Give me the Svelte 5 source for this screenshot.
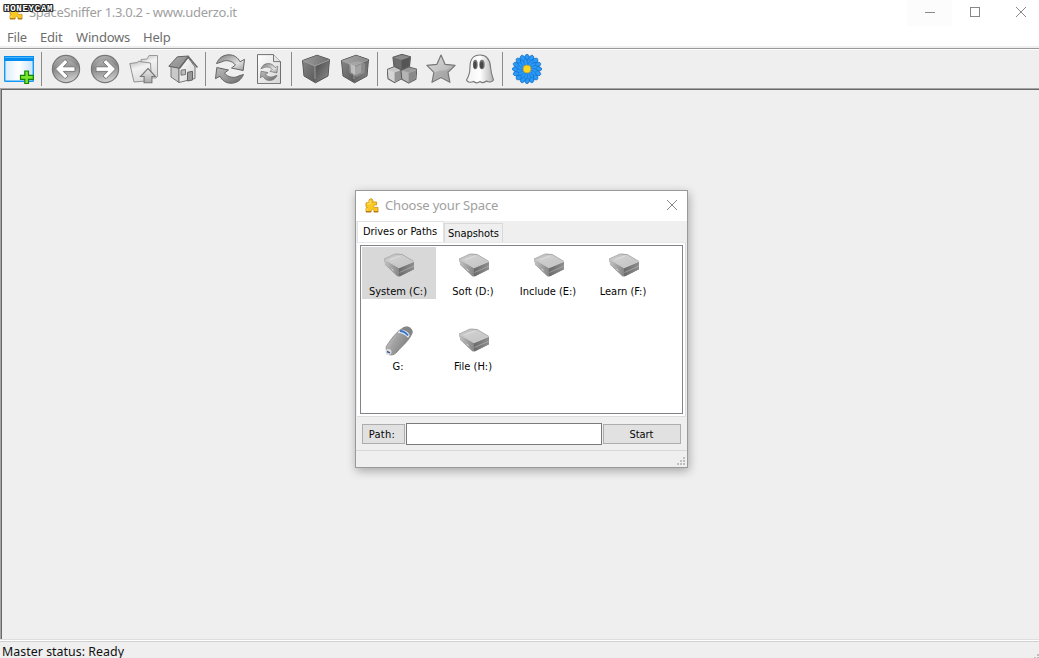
<script>
  const groups = [
    ['new'],
    ['back', 'forward', 'up', 'home'],
    ['refresh', 'rescan'],
    ['less', 'more'],
    ['classes', 'star', 'ghost'],
    ['flower']
  ];
  const menus = [
    { label: 'File', width: 33 },
    { label: 'Edit', width: 36 },
    { label: 'Windows', width: 67 },
    { label: 'Help', width: 40 }
  ];
  const drives = [
    { label: 'System (C:)', kind: 'disk', selected: true },
    { label: 'Soft (D:)', kind: 'disk' },
    { label: 'Include (E:)', kind: 'disk' },
    { label: 'Learn (F:)', kind: 'disk' },
    { label: 'G:', kind: 'usb' },
    { label: 'File (H:)', kind: 'disk' }
  ];
  const petals = Array.from({ length: 16 }, (_, i) => i * 22.5);
</script>

{#snippet puzzle()}
  <svg class="puzzle" viewBox="0 0 14 15" width="14" height="15">
    <path d="M1 13.800V10.200L2.400 9.500 1 8.800V4.800H4.200C3.400 3 4 .9 5.900.8S8.400 3 7.600 4H11.600V7H10.400C8.400 6.600 8.200 9.400 10 9.800L11.400 9.300H13V13.800H8.800V12.400C8.600 11 6.400 11 6.300 12.400V13.800z" fill="#f9c922" stroke="#d0941c" stroke-width=".9" />
    <path d="M2 5.800H5.200L5 2.500M2 10.500v2" fill="none" stroke="#ffec77" stroke-width="1" />
    <path d="M1 13.800h5M9 13.800h4.200" stroke="#a96813" />
  </svg>
{/snippet}

{#snippet cross()}
  <svg viewBox="0 0 12 12" width="12" height="12"><path d="M1 1l10 10M11 1L1 11" stroke="#888" stroke-width="1" /></svg>
{/snippet}

{#snippet swirl()}
  <path d="M1.500 9.500C4 4 8 .8 14 .8c5 0 9 2.700 11 7l4.500-2.500L28.200 16.500 16.500 14l4-3C17.500 6.500 10 5.500 6.500 8z" fill="url(#arc)" stroke="#646464" stroke-width="1" stroke-linejoin="round" />
  <path transform="rotate(180 15 15)" d="M1.500 9.500C4 4 8 .8 14 .8c5 0 9 2.700 11 7l4.500-2.500L28.200 16.500 16.500 14l4-3C17.500 6.500 10 5.500 6.500 8z" fill="url(#arcBack)" stroke="#646464" stroke-width="1" stroke-linejoin="round" />
{/snippet}

{#snippet cube()}
  <path d="M16 1.200L28.500 5.500 27 22 14.500 28.800 3 22 1.500 6.500z" fill="#646464" stroke="#555" stroke-linejoin="round" />
  <path d="M16 1.500L28 5.700 14 12 2 6.700z" fill="url(#cubeTop)" />
  <path d="M2 7L14 12v16L3.400 21.700z" fill="url(#cubeLeft)" />
  <path d="M14 12L28 6l-1.400 15.700L14 28.300z" fill="url(#cubeRight)" />
  <path d="M2 6.800L14 12 28 6M14 12v13" fill="none" stroke="#aaa" stroke-width=".8" />
{/snippet}

{#snippet smallCube(left, right, top)}
  <path d="M15 1.500L28 5.500 26.500 22 14.500 28.500 3 22 1.500 6.500z" fill={left} stroke="#5e5e5e" stroke-width="1.800" stroke-linejoin="round" />
  <path d="M15 2.500L27 6 14 11 2.500 7z" fill={top} />
  <path d="M14.500 11.500L27 7l-1 14.500-11.500 6z" fill={right} />
{/snippet}

{#snippet icon(name)}
  <svg class="icon" viewBox="0 0 30 30" width="30" height="30">
    {#if name === 'new'}
      <rect x=".7" y="2.700" width="28.600" height="24.600" rx=".8" fill="url(#pane)" stroke="#1597f5" stroke-width="1.400" />
      <path d="M0 2h30v5H0z" fill="#078df0" /><path d="M1 3h28v1H1z" fill="#48b5fc" />
      <path d="M20.800 18.500h3.700v4.300h4.800v4h-4.800v4.200h-3.700v-4.200H16.500v-4h4.300z" transform="translate(0 -1.500)" fill="#7ce52e" stroke="#118500" stroke-width="1.200" />
    {:else if name === 'back' || name === 'forward'}
      <circle cx="15" cy="15" r="13.600" fill="url(#ball)" stroke="#777" stroke-width="1.200" />
      <path d="M4 17A11.500 11.500 0 0 1 26 13Q16 13 4 17z" fill="#fff" opacity=".16" />
      <path transform={name === 'forward' ? 'translate(30 0) scale(-1 1)' : undefined} d="M4.500 15L14 5.500l3 2.600-4.700 4.700H24v4.600H12.300l4.700 4.700-3 2.600z" fill="#fff" stroke="#707070" stroke-width=".9" />
    {:else if name === 'up'}
      <path d="M12 24V5.500L18 5l2-3.500h8.500v21L27 24z" fill="url(#folder)" stroke="#999" />
      <path d="M.8 9.500L8 8.600l1.500-1.300L21.500 9l1 17.500L5 28z" fill="url(#folder)" stroke="#929292" />
      <path d="M19 14.500l7.500 8h-3.600v6.200h-7.800v-6.200H11.500z" fill="url(#paper)" stroke="#777" stroke-width="1.100" />
    {:else if name === 'home'}
      <path d="M3 12.500L11 14v14.500L3 23z" fill="#c9c9c9" stroke="#777" />
      <path d="M11 28.500V14l9-10.500 7 9.500v11.500z" fill="url(#sheet)" stroke="#777" />
      <path d="M.8 12.200L9.300 2.800 20.500 2 11.500 14.300z" fill="url(#roof)" stroke="#646464" />
      <path d="M11.500 14.300L20.400 2.800l9 10.800" fill="none" stroke="#686868" stroke-width="1.500" />
      <path d="M19.500 27V18.300l5-1V26z" fill="#999" stroke="#646464" /><path d="M13 16.200l4.500-.7v5l-4.500.7z" fill="#bbb" stroke="#777" />
    {:else if name === 'refresh'}
      {@render swirl()}
    {:else if name === 'rescan'}
      <path d="M3.500.6h16l7 7v22h-23z" fill="url(#sheet)" stroke="#707070" />
      <path d="M19.500.6v7h7" fill="#e4e4e4" stroke="#777" />
      <g transform="translate(6 9) scale(.6)">{@render swirl()}</g>
    {:else if name === 'less'}
      {@render cube()}
    {:else if name === 'more'}
      {@render cube()}
      <path d="M16 1.500L28 5.700 14 12 2 6.700z" fill="#bbb" opacity=".35" />
      <path d="M9 9.500l9-2.500 7.500 2.500-1.200 9.500-7.800 4-7-4z" fill="#bbb" opacity=".4" />
      <path d="M10.500 10.500l5 2v8.500l-4.500-2.500z" fill="#ddd" opacity=".6" /><path d="M15.500 12.500l6-2.500-.5 8.500-5.500 2.500z" fill="#bbb" opacity=".6" />
    {:else if name === 'classes'}
      <g transform="translate(-.7 11.500) scale(.57 .6)">{@render smallCube('#d6d6d6', '#949494', '#c6c6c6')}</g>
      <g transform="translate(13 12) scale(.6)">{@render smallCube('#b4b4b4', '#8a8a8a', '#9a9a9a')}</g>
      <g transform="translate(5 -.5) scale(.66 .58)">{@render smallCube('#6c6c6c', '#555', '#8b8b8b')}</g>
    {:else if name === 'star'}
      <path d="M15 1l4.200 9.400 9.900.9-7.100 7 1.900 10L15 23.500 6 28.300l1.900-10-7-7 9.900-.9z" fill="url(#starFill)" stroke="#777" stroke-width="1.200" stroke-linejoin="round" />
      <path d="M8.500 19q3-3 8-2.500t8-4.500l-3 6 2 8.500-8.500-4.200L7 27z" fill="#888" opacity=".35" />
    {:else if name === 'ghost'}
      <path d="M5 13C5 5 8.500 1 15 1S25 6 25.500 13c.4 6 1.500 9 3 13-1.500 2.500-5 2.500-7 1-2 1.700-4.500 2-6.500.5-2 1.500-4.800 1.500-6.500 0-2.500 1.300-6 1-7-1.500C4 22 5 18 5 13z" fill="url(#ghostFill)" stroke="#777" stroke-width="1.100" />
      <ellipse cx="10.300" cy="10.500" rx="2.400" ry="4.800" fill="#777" /><ellipse cx="17" cy="10.500" rx="2.700" ry="4.800" fill="#777" />
      <ellipse cx="10" cy="11" rx="1.500" ry="3.600" fill="#484848" /><ellipse cx="16.600" cy="11" rx="1.700" ry="3.600" fill="#484848" />
    {:else}
      {#each petals as angle (angle)}
        <ellipse cx="15" cy="6.500" rx="2.900" ry="6.200" fill="#2999fa" stroke="#0d66b8" stroke-width=".7" transform={`rotate(${angle} 15 15)`} />
      {/each}
      {#each petals as angle (angle)}
        <ellipse cx="15" cy="8.500" rx="1.800" ry="4" fill="#2c98f7" stroke="#1173cb" stroke-width=".5" transform={`rotate(${angle + 11} 15 15)`} />
      {/each}
      <circle cx="15" cy="15" r="4" fill="#ffd51f" stroke="#a99b3b" stroke-width=".7" />
    {/if}
  </svg>
{/snippet}

{#snippet drive(kind)}
  <svg viewBox="0 0 32 32" width="32" height="32">
    {#if kind === 'disk'}
      <g transform="translate(0 1)">
        <path d="M1 8L13.500 2.800 19 3.200 31 10.500v7.800L17 25.300 14.500 25.200 2.500 14z" fill="#777" />
        <path d="M1 8L11.500 3 19 3.400 31 10.400 16 16.800z" fill="url(#diskTop)" stroke="#aaa" stroke-width=".6" />
        <path d="M1 8.600L16 17v8.200h-1.500L2.500 14z" fill="url(#diskLeft)" />
        <path d="M16 17l15-6v7.300L17 25.300h-1z" fill="url(#diskRight)" />
        <path d="M16.500 21.500L31 15" stroke="#bbb" stroke-width=".6" /><path d="M1.500 8.500L16 16.800l15-6.400" stroke="#e1e1e1" stroke-width=".7" fill="none" />
        <path d="M7 8.500l10-3.500" stroke="#e8e8e8" stroke-width=".6" /><path d="M8.500 18l2 1.500" stroke="#ddd" />
      </g>
    {:else}
      <path d="M3 22C8 14 14 6 20 3c5-3 10 .5 9 5-2 7-10 13-15 19-3 3.500-8 4-10 1-1-1.500-.5-4-1-6z" fill="url(#usb)" stroke="#858585" stroke-width=".8" />
      <path d="M15 7c4-3 9-2 12 3l-2 3c-2-3-6-5-10-5z" fill="#dce6f4" />
      <path d="M17 6c3 0 6 2 8 4.500" fill="none" stroke="#3974c9" stroke-width="1.800" />
      <path d="M20 2.500c5-2 10 1 9.500 5.500l-2.500 3c-1-4-4-6-8-6.500z" fill="#858585" />
      <circle cx="5.500" cy="27" r="3" fill="#ddd" /><path d="M4 26.500l3 1.300" stroke="#37569b" stroke-width="1.400" />
    {/if}
  </svg>
{/snippet}

{#snippet grip()}
  <svg class="grip" viewBox="0 0 8 8" width="8" height="8"><path d="M6 0h2v2H6zM3 3h2v2H3zM6 3h2v2H6zM0 6h2v2H0zM3 6h2v2H3zM6 6h2v2H6z" fill="#bfbfbf" /></svg>
{/snippet}

<svg class="defs" width="0" height="0" aria-hidden="true">
  <defs>
    <linearGradient id="pane"><stop stop-color="#d8ecfb" /><stop offset=".5" stop-color="#fff" /><stop offset="1" stop-color="#c5e3fc" /></linearGradient>
    <linearGradient id="ball" x2=".2" y2="1"><stop stop-color="#b9b9b9" /><stop offset=".5" stop-color="#858585" /><stop offset="1" stop-color="#cacaca" /></linearGradient>
    <linearGradient id="arc" y2="1"><stop stop-color="#777" /><stop offset=".4" stop-color="#bbb" /><stop offset=".65" stop-color="#e2e2e2" /><stop offset="1" stop-color="#999" /></linearGradient>
    <linearGradient id="arcBack" y2="1"><stop stop-color="#666" /><stop offset=".5" stop-color="#999" /><stop offset="1" stop-color="#bbb" /></linearGradient>
    <linearGradient id="folder" x2=".3" y2="1"><stop stop-color="#bcbcbc" /><stop offset=".4" stop-color="#f2f2f2" /><stop offset="1" stop-color="#ddd" /></linearGradient>
    <linearGradient id="paper" x2="0" y2="1"><stop stop-color="#eee" /><stop offset="1" stop-color="#aaa" /></linearGradient>
    <linearGradient id="sheet" y2="1"><stop stop-color="#fff" /><stop offset="1" stop-color="#d5d5d5" /></linearGradient>
    <linearGradient id="roof" y2="1"><stop stop-color="#aaa" /><stop offset="1" stop-color="#888" /></linearGradient>
    <linearGradient id="cubeTop"><stop stop-color="#9b9b9b" /><stop offset="1" stop-color="#707070" /></linearGradient>
    <linearGradient id="cubeLeft" y2="1"><stop stop-color="#858585" /><stop offset="1" stop-color="#5a5a5a" /></linearGradient>
    <linearGradient id="cubeRight" y2="1"><stop stop-color="#484848" /><stop offset="1" stop-color="#8d8d8d" /></linearGradient>
    <linearGradient id="starFill" y2="1"><stop stop-color="#ddd" /><stop offset="1" stop-color="#aaa" /></linearGradient>
    <linearGradient id="ghostFill"><stop stop-color="#f1f1f1" /><stop offset=".5" stop-color="#fff" /><stop offset="1" stop-color="#b3b3b3" /></linearGradient>
    <linearGradient id="diskTop" x2=".8" y2="1"><stop stop-color="#aaa" /><stop offset=".35" stop-color="#cfcfcf" /><stop offset="1" stop-color="#c4c4c4" /></linearGradient>
    <linearGradient id="diskLeft"><stop stop-color="#c4c4c4" /><stop offset="1" stop-color="#858585" /></linearGradient>
    <linearGradient id="diskRight"><stop stop-color="#6a6a6a" /><stop offset="1" stop-color="#8f8f8f" /></linearGradient>
    <linearGradient id="usb" y2=".6"><stop stop-color="#eee" /><stop offset=".45" stop-color="#a5a5a5" /><stop offset="1" stop-color="#777" /></linearGradient>
  </defs>
</svg>

<main>
  <header>
    <div class="app-icon">{@render puzzle()}</div>
    <span class="app-title">SpaceSniffer 1.3.0.2 - www.uderzo.it</span>
    <div class="window-buttons">
      <span class="minimize"><i></i></span>
      <span><i class="square"></i></span>
      <span class="shut">{@render cross()}</span>
    </div>
    <span class="recorder">HONEYCAM</span>
  </header>
  <nav>
    {#each menus as menu (menu.label)}
      <span style:width={`${menu.width}px`}>{menu.label}</span>
    {/each}
  </nav>
  <div class="toolbar">
    {#each groups as group, index (index)}
      {#if index}<div class="separator"></div>{/if}
      {#each group as name (name)}
        <div class="tool">{@render icon(name)}</div>
      {/each}
    {/each}
  </div>
  <div class="workspace"></div>
  <footer><span>Master status: Ready</span><div class="main-grip">{@render grip()}</div></footer>

  <section class="dialog">
    <div class="dialog-title">{@render puzzle()}<span>Choose your Space</span><div class="close">{@render cross()}</div></div>
    <div class="tabs"><div class="tab active"><span>Drives or Paths</span></div><div class="tab"><span>Snapshots</span></div></div>
    <div class="page">
      <div class="drives">
        {#each drives as item (item.label)}
          <div class="cell">
            <div class="drive" class:selected={item.selected}>{@render drive(item.kind)}<span>{item.label}</span></div>
          </div>
        {/each}
      </div>
    </div>
    <div class="path-row"><button class="path">Path:</button><input aria-label="Path" /><button class="start">Start</button></div>
    <div class="dialog-status">{@render grip()}</div>
  </section>
</main>

<style>
  :global(body) { margin: 0; overflow: hidden; }
  main { position: relative; width: 1039px; height: 658px; display: flex; flex-direction: column; overflow: hidden; background: #efefef; font: 13px "Noto Sans", sans-serif; }
  * { box-sizing: border-box; }
  svg { display: block; flex: none; }
  .defs { position: absolute; }
  header { position: relative; display: flex; height: 26px; background: #fff; color: #a0a0a0; line-height: 24px; }
  .app-icon { width: 29px; padding: 5px 0 0 9px; }
  .app-title { font-size: 13px; letter-spacing: -.3px; white-space: nowrap; }
  .recorder { position: absolute; left: 4px; top: 4px; font: bold 9px/11px "Liberation Mono", monospace; letter-spacing: .75px; color: #fff; text-shadow: 1px 0 #222, -1px 0 #222, 0 1px #222, 0 -1px #222, 1px 1px #222, -1px -1px #222, 1px -1px #222, -1px 1px #222; }
  .window-buttons { display: flex; margin-left: auto; width: 132px; }
  .window-buttons span { width: 45px; display: flex; flex: none; align-items: center; justify-content: center; height: 26px; padding-bottom: 1px; }
  .window-buttons .minimize { background: #fcfcfc; }
  .window-buttons .shut { width: 47px; padding-bottom: 2px; }
  .minimize i { width: 10px; height: 1px; background: #888; }
  .square { width: 10px; height: 10px; margin-top: -1px; border: 1px solid #888; }
  nav { display: flex; height: 22px; flex: none; padding-left: 7px; border-bottom: 2px solid #efefef; background: #fff; color: #6d6d6d; line-height: 23px; font-size: 13px; letter-spacing: -.2px; }
  .toolbar { display: flex; height: 40px; flex: none; border-top: 1px solid #999; box-shadow: inset 0 1px #fff; padding-top: 5px; }
  .tool { width: 39px; padding-left: 4px; flex: none; }
  .separator { width: 8px; height: 34px; padding-left: 2px; margin-top: -2px; flex: none; }
  .separator::before { content: ""; display: block; width: 1px; height: 34px; background: #8b8b8b; }
  .workspace { flex: 1; border-top: 1px solid #a5a5a5; border-left: 1px solid #a5a5a5; box-shadow: inset 1px 1px #696969; }
  footer { height: 19px; flex: none; display: flex; border-top: 1px solid #dedede; background: linear-gradient(#fff 1px, #d0d0d0 1px, #d0d0d0 2px, #efefef 2px); padding: 4px 0 0 2px; font-size: 12.400px; line-height: 16px; color: #111; letter-spacing: .03px; }
  .main-grip { width: 5px; margin: 7px 0 0 auto; }
  .dialog { position: absolute; left: 355px; top: 190px; width: 333px; height: 278px; border: 1px solid #999; background: #efefef; box-shadow: 1px 3px 9px rgba(0,0,0,.3); color: #050505; font: 11px "DejaVu Sans Condensed", "DejaVu Sans", sans-serif; font-stretch: condensed; letter-spacing: -.05px; }
  .dialog-title { height: 30px; display: flex; align-items: center; background: #fff; padding: 0 9px 2px; font: 13px "Noto Sans", sans-serif; letter-spacing: -.18px; color: #a0a0a0; }
  .dialog-title span { margin-left: 6px; }
  .close { margin-left: auto; }
  .tabs { height: 21px; display: flex; align-items: flex-end; padding-left: 1px; }
  .tab { height: 19px; width: 59px; border: 1px solid #d9d9d9; border-bottom: 0; padding: 3px 0 0 3px; white-space: nowrap; line-height: 14px; }
  .tab.active { height: 21px; width: 87px; background: #fff; border-color: #e1e1e1; padding: 3px 0 0 5px; }
  .page { height: 175px; width: 329px; margin-left: 1px; background: #fff; border-right: 1px solid #ddd; border-bottom: 1px solid #ddd; box-shadow: inset 0 1px #e8e8e8; padding: 3px 3px 4px; }
  .drives { width: 323px; height: 169px; border: 1px solid #82828b; display: grid; grid-template-columns: repeat(4, 75px); grid-auto-rows: 75px; padding: 1px; }
  .drive { width: 74px; height: 52px; display: flex; flex-direction: column; align-items: center; padding-top: 3px; }
  .selected { background: #d8d8d8; }
  .drive span { line-height: 16px; white-space: nowrap; margin-top: 2px; padding-right: 2px; letter-spacing: 0; }
  .path-row { display: flex; height: 33px; padding: 6px 6px 0; align-items: flex-start; }
  button, input { margin: 0; border-radius: 0; font: inherit; letter-spacing: inherit; color: inherit; }
  button { height: 20px; padding: 0; border: 1px solid #adadad; background: #e1e1e1; margin-top: 1px; }
  .path { width: 43px; padding-right: 3px; letter-spacing: .3px; }
  input { width: 196px; height: 22px; background: #fff; border: 1px solid #7a7a7a; margin: 0 1px; }
  .start { width: 78px; padding-right: 1px; }
  .dialog-status { height: 17px; border-top: 1px solid #d7d7d7; display: flex; justify-content: flex-end; padding: 6px 2px 0 0; }
</style>
